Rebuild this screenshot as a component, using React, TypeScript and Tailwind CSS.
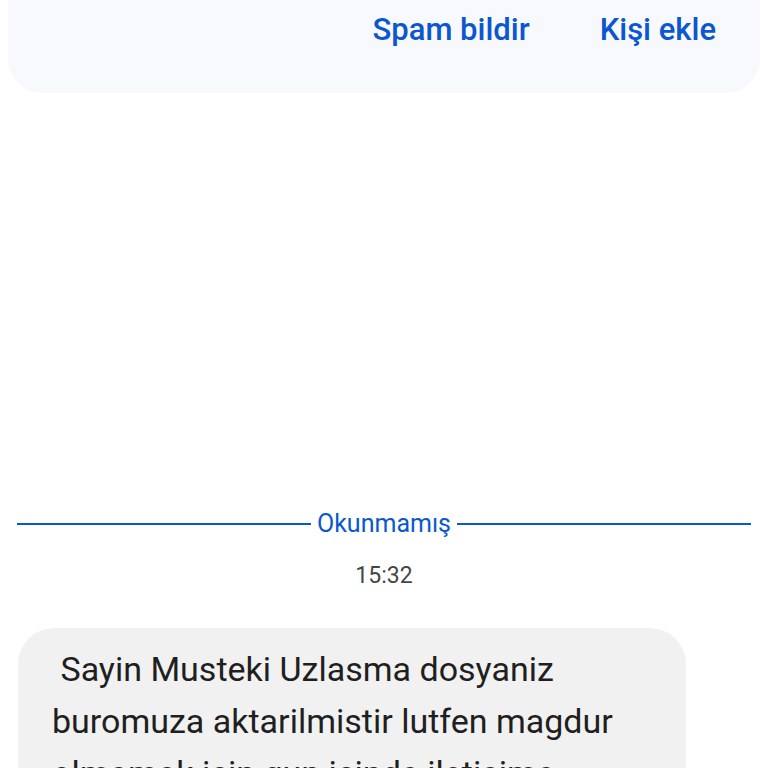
export default function App() {
  return (
    <div className="w-[768px] h-[768px] overflow-hidden bg-white font-['Roboto','Noto_Sans',sans-serif]">
      {/* Top action card */}
      <div className="mx-2 h-[93px] rounded-b-[34px] bg-[#f8f9fd] flex items-start justify-end gap-[70px] pr-[44px] pt-[10px]">
        <button className="text-[31px] leading-[40px] font-medium text-[#0b57d0]">Spam bildir</button>
        <button className="text-[31px] leading-[40px] font-medium text-[#0b57d0]">Kişi ekle</button>
      </div>

      {/* Unread divider */}
      <div className="mt-[416px] px-[17px] flex items-center gap-[6px]">
        <div className="flex-1 h-[2px] bg-[#0b57d0]" />
        <span className="text-[25px] leading-[30px] text-[#0b57d0]">Okunmamış</span>
        <div className="flex-1 h-[2px] bg-[#0b57d0]" />
      </div>

      <div className="mt-[22px] text-center text-[23px] leading-[30px] text-[#444746]">15:32</div>

      {/* Message bubble */}
      <div className="mt-[37px] ml-[18px] w-[668px] rounded-[36px] bg-[#f1f1f1] pl-[34px] pr-[34px] pt-[15px] pb-[20px]">
        <p className="text-[34px] leading-[52px] text-[#1f1f1f] whitespace-pre-wrap">
          {' Sayin Musteki Uzlasma dosyaniz buromuza aktarilmistir lutfen magdur olmamak icin gun icinde iletisime geciniz'}
        </p>
      </div>
    </div>
  );
}
